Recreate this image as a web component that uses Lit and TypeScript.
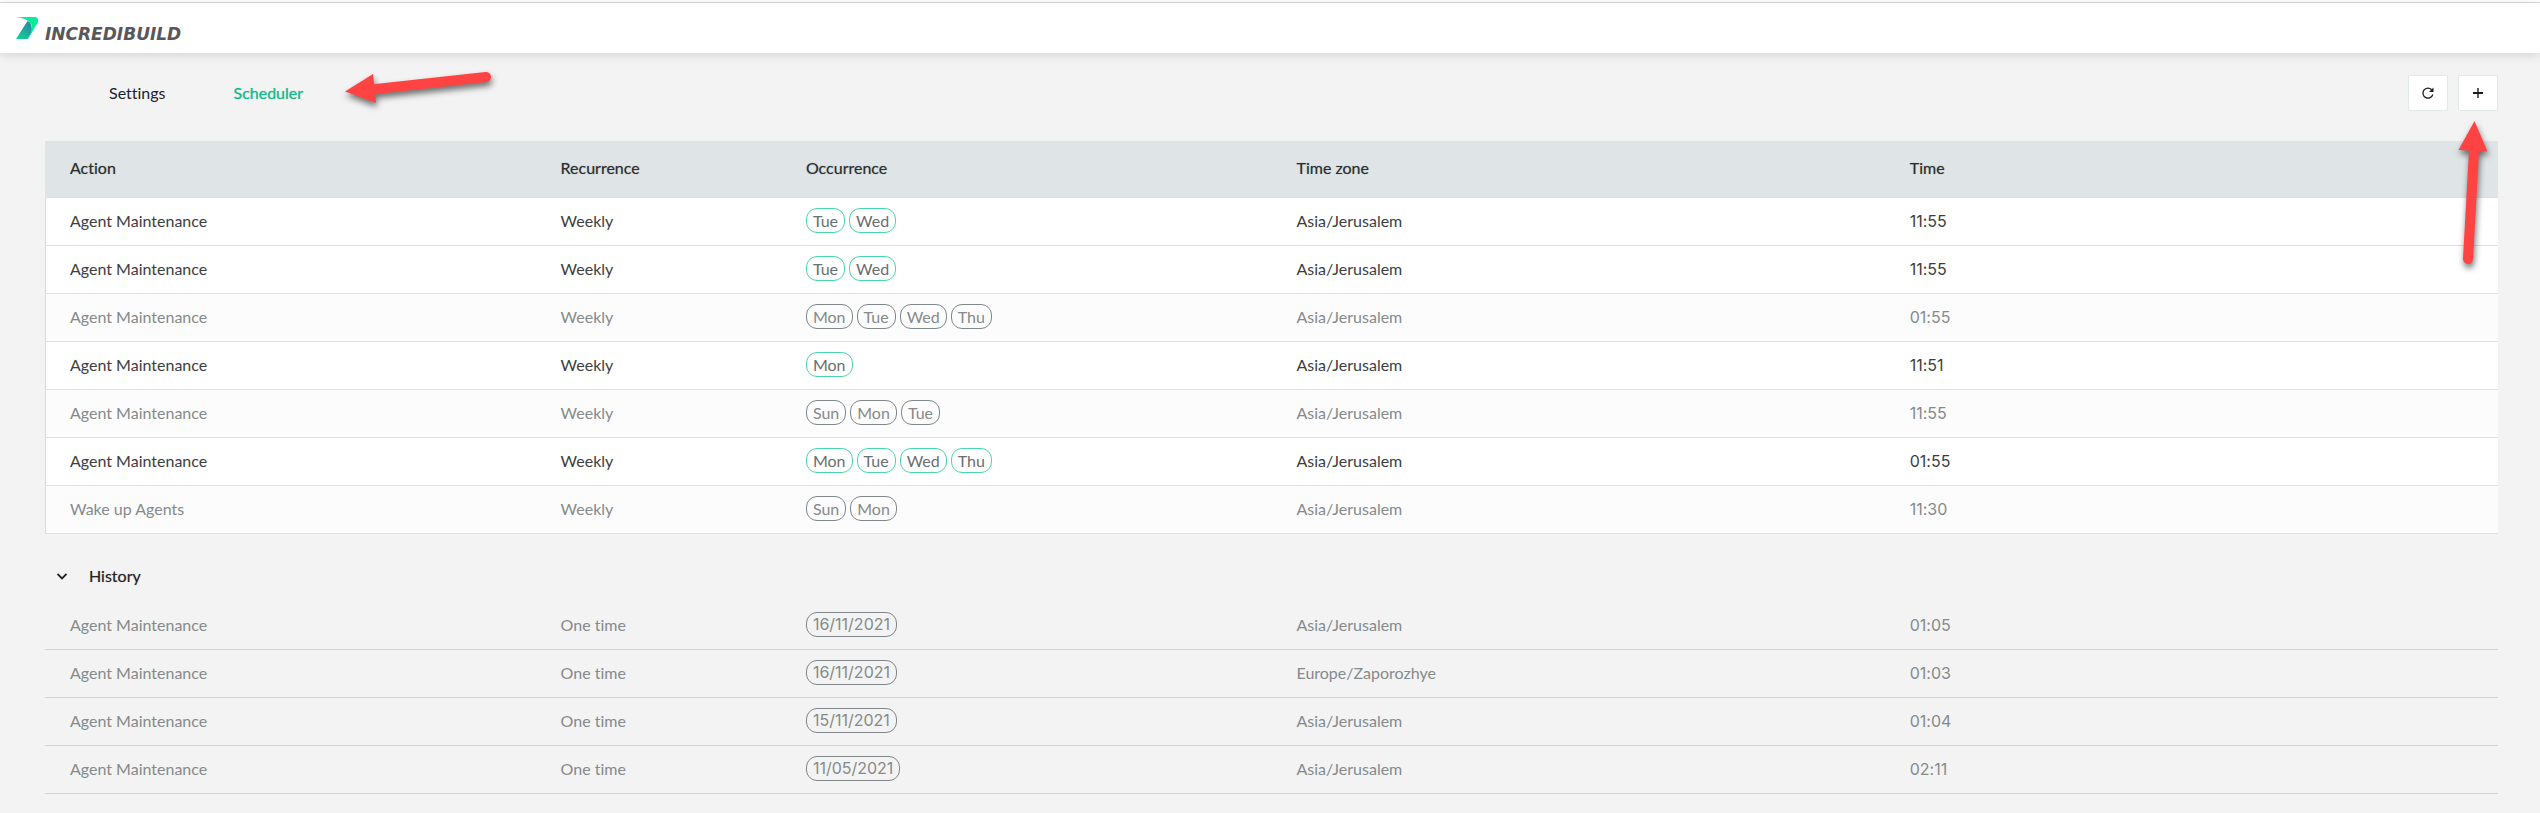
import { LitElement, html, css, svg } from "lit";
import { customElement, property, state } from "lit/decorators.js";
import { classMap } from "lit/directives/class-map.js";

interface Task {
  action: string;
  recurrence: string;
  occurrence: string[];
  zone: string;
  time: string;
  enabled?: boolean;
}

const weekly = (action: string, days: string, time: string, enabled: boolean): Task => ({
  action,
  recurrence: "Weekly",
  occurrence: days.split(" "),
  zone: "Asia/Jerusalem",
  time,
  enabled,
});

const once = (date: string, zone: string, time: string): Task => ({
  action: "Agent Maintenance",
  recurrence: "One time",
  occurrence: [date],
  zone,
  time,
});

const SCHEDULED: Task[] = [
  weekly("Agent Maintenance", "Tue Wed", "11:55", true),
  weekly("Agent Maintenance", "Tue Wed", "11:55", true),
  weekly("Agent Maintenance", "Mon Tue Wed Thu", "01:55", false),
  weekly("Agent Maintenance", "Mon", "11:51", true),
  weekly("Agent Maintenance", "Sun Mon Tue", "11:55", false),
  weekly("Agent Maintenance", "Mon Tue Wed Thu", "01:55", true),
  weekly("Wake up Agents", "Sun Mon", "11:30", false),
];

const HISTORY: Task[] = [
  once("16/11/2021", "Asia/Jerusalem", "01:05"),
  once("16/11/2021", "Europe/Zaporozhye", "01:03"),
  once("15/11/2021", "Asia/Jerusalem", "01:04"),
  once("11/05/2021", "Asia/Jerusalem", "02:11"),
];

const COLUMNS = ["Action", "Recurrence", "Occurrence", "Time zone", "Time"];

@customElement("task-table")
class TaskTable extends LitElement {
  @property({ attribute: false }) tasks: Task[] = [];
  @property({ type: Boolean, reflect: true }) history = false;

  static styles = css`
    :host {
      display: block;
    }
    table {
      width: 100%;
      table-layout: fixed;
      border-collapse: separate;
      border-spacing: 0;
    }
    .wide {
      width: 20%;
    }
    .narrow {
      width: 10%;
    }
    .rest {
      width: 25%;
    }
    th,
    td {
      box-sizing: border-box;
      padding: 0 0 2px 25px;
      text-align: left;
      font-weight: 400;
      border-bottom: 1px solid #dedfe0;
    }
    th {
      height: 57px;
      background: #dfe4e6;
      color: #2a2e2f;
      text-shadow: 0 0 1px rgba(31, 35, 36, 0.4);
    }
    td {
      height: 48px;
      background: #fcfcfc;
      color: #858a8b;
    }
    td:first-child {
      padding-left: 24px;
      border-left: 1px solid #d9dcdd;
    }
    .enabled td {
      background: #ffffff;
      color: #3c3e3f;
    }
    :host([history]) td {
      background: none;
      border-bottom-color: #d4d5d6;
    }
    :host([history]) td:first-child {
      padding-left: 25px;
      border-left: 0;
    }
    .chips {
      display: flex;
      gap: 4px;
    }
    .chip {
      padding: 0 6px;
      border: 1px solid #7f8788;
      border-radius: 11px;
      line-height: 23px;
      color: #858a8b;
    }
    .enabled .chip {
      border-color: #48d8ac;
      color: #6a6e6f;
    }
    .digits {
      font-family: Inter, "Liberation Sans", sans-serif;
    }
  `;

  render() {
    return html`
      <table aria-label=${this.history ? "History" : "Scheduled tasks"}>
        <colgroup>
          <col class="wide" />
          <col class="narrow" />
          <col class="wide" />
          <col class="rest" />
          <col class="rest" />
        </colgroup>
        ${this.history
          ? null
          : html`<thead>
              <tr>
                ${COLUMNS.map((c) => html`<th scope="col">${c}</th>`)}
              </tr>
            </thead>`}
        <tbody>
          ${this.tasks.map(
            (t) => html`<tr class=${classMap({ enabled: !!t.enabled })}>
              <td>${t.action}</td>
              <td>${t.recurrence}</td>
              <td>
                <div class="chips">
                  ${t.occurrence.map(
                    (o) => html`<span class=${classMap({ chip: true, digits: this.history })}>${o}</span>`
                  )}
                </div>
              </td>
              <td>${t.zone}</td>
              <td class="digits">${t.time}</td>
            </tr>`
          )}
        </tbody>
      </table>
    `;
  }
}

@customElement("app-root")
class AppRoot extends LitElement {
  @state() private open = true;

  static styles = css`
    :host {
      display: block;
      min-height: 100vh;
      background: #f3f3f3;
      color: #1f2324;
      font: 16px/20px Lato, "Open Sans", sans-serif;
      font-variant-ligatures: none;
    }
    .edge {
      height: 2px;
      background: #ffffff;
      border-bottom: 1px solid #d9dadb;
    }
    .header {
      display: flex;
      align-items: center;
      gap: 7px;
      height: 50px;
      padding: 0 16px;
      background: #ffffff;
      box-shadow: 0 2px 10px rgba(0, 0, 0, 0.13);
    }
    .mark {
      width: 22px;
      height: 22px;
    }
    .brand {
      padding-top: 12px;
      font: italic 700 17px/20px "DejaVu Sans", sans-serif;
      color: #58585a;
    }
    .page {
      padding: 22px 42px 20px 45px;
    }
    .toolbar {
      display: flex;
      align-items: center;
      justify-content: space-between;
      margin-bottom: 30px;
    }
    .tabs {
      position: relative;
      display: flex;
      padding-left: 30px;
    }
    .tab {
      padding: 0 34px;
      color: #1f2324;
      text-decoration: none;
    }
    .tab.current {
      color: #14b88a;
      text-shadow: 0 0 1px rgba(20, 184, 138, 0.6);
    }
    .actions {
      position: relative;
      display: flex;
      gap: 10px;
    }
    .action {
      display: grid;
      place-items: center;
      width: 40px;
      height: 36px;
      padding: 0;
      border: 1px solid #e0e8ea;
      border-radius: 2px;
      background: #ffffff;
      color: #1b1e1f;
    }
    .pointer {
      position: absolute;
      overflow: visible;
      pointer-events: none;
      filter: drop-shadow(1px 4px 3px rgba(0, 0, 0, 0.55));
    }
    .pointer.left {
      left: 100%;
      top: -14px;
    }
    .pointer.up {
      right: 8px;
      top: 46px;
      z-index: 1;
    }
    .toggle {
      display: flex;
      align-items: center;
      gap: 22px;
      height: 50px;
      margin-top: 18px;
      padding: 0 12px 2px;
      border: 0;
      background: none;
      color: inherit;
      font: inherit;
      text-shadow: 0 0 1px rgba(31, 35, 36, 0.4);
    }
    .closed .chevron {
      transform: rotate(-90deg);
    }
  `;

  private logo() {
    return svg`<svg class="mark" viewBox="0 0 22 22" aria-hidden="true">
      <defs>
        <linearGradient id="body" x1="0.8" y1="0" x2="0.2" y2="1">
          <stop offset="0" stop-color="#2f87a3" />
          <stop offset="0.5" stop-color="#20a79c" />
          <stop offset="1" stop-color="#12d39b" />
        </linearGradient>
      </defs>
      <path d="M0 22 L11.500 4 Q17 6 15.500 16 L11.500 22 Z" fill="url(#body)" />
      <path d="M0 0 H19 Q23.500 0.500 21.500 6 L12 22 H11 Q18.500 12 15 7 Q10 0.500 0 0 Z" fill="#06ec9c" />
    </svg>`;
  }

  render() {
    return html`
      <div class="edge"></div>
      <header class="header">
        ${this.logo()}
        <span class="brand">INCREDIBUILD</span>
      </header>
      <main class="page">
        <div class="toolbar">
          <nav class="tabs">
            <a class="tab" href="#settings">Settings</a>
            <a class="tab current" href="#scheduler" aria-current="page">Scheduler</a>
            <svg class="pointer left" width="152" height="34" viewBox="0 0 152 34" aria-hidden="true">
              <path d="M39 20 L149 8" stroke="#ff4343" stroke-width="10" stroke-linecap="round" />
              <path d="M8 22.500 L36 5 L39 34 Z" fill="#ff4343" />
            </svg>
          </nav>
          <div class="actions">
            <button class="action" type="button" aria-label="Refresh">
              <svg width="12" height="12" viewBox="0 0 12 12" fill="none" stroke="currentColor" stroke-width="1.300" aria-hidden="true">
                <path d="M10.800 7.500 A5 5 0 1 1 9.600 2.700" />
                <path d="M11.500 0.500 V5 H7 Z" fill="currentColor" stroke="none" />
              </svg>
            </button>
            <button class="action" type="button" aria-label="Add task">
              <svg width="10" height="10" viewBox="0 0 10 10" fill="none" stroke="currentColor" aria-hidden="true">
                <path d="M0 5 H10" stroke-width="2" />
                <path d="M5 0 V10" stroke-width="1.400" />
              </svg>
            </button>
            <svg class="pointer up" width="32" height="146" viewBox="0 0 32 146" aria-hidden="true">
              <path d="M16 30 L10 138" stroke="#ff4343" stroke-width="10" stroke-linecap="round" />
              <path d="M16.500 0 L0.500 29 L29.500 30.500 Z" fill="#ff4343" />
            </svg>
          </div>
        </div>
        <task-table .tasks=${SCHEDULED}></task-table>
        <button
          class=${classMap({ toggle: true, closed: !this.open })}
          type="button"
          aria-expanded=${this.open}
          @click=${() => (this.open = !this.open)}
        >
          <svg class="chevron" width="10" height="7" viewBox="0 0 10 7" fill="none" stroke="currentColor" stroke-width="1.800" aria-hidden="true">
            <path d="M0.500 1 L5 5.500 L9.500 1" />
          </svg>
          History
        </button>
        ${this.open ? html`<task-table history .tasks=${HISTORY}></task-table>` : null}
      </main>
    `;
  }
}
